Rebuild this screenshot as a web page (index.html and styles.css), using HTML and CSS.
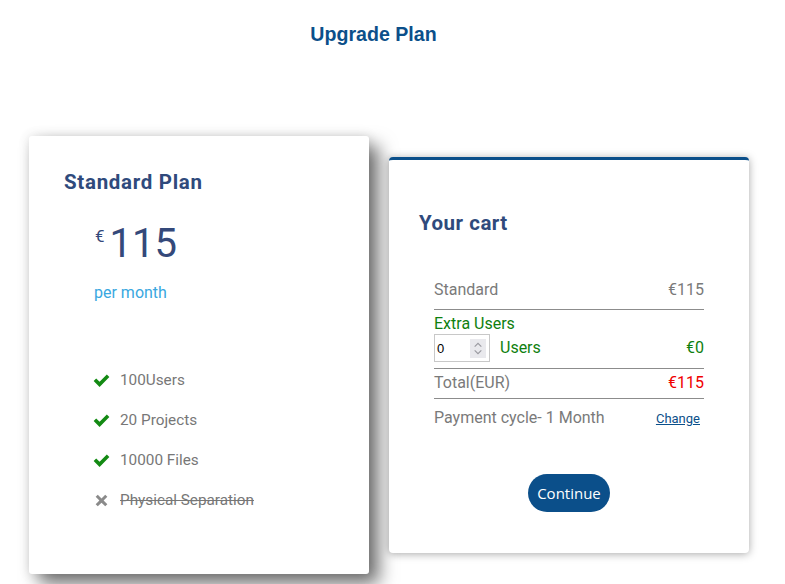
FILE: index.html
```html
<!DOCTYPE html>
<html>
<head>
<meta charset="utf-8">
<link rel="stylesheet" href="styles.css">
</head>
<body>
<div class="header"><h1 class="page-title">Upgrade Plan</h1></div>
<div class="cards">
  <div class="plan-card">
    <h2 class="plan-title">Standard Plan</h2>
    <div class="price"><span class="currency">€</span><span class="amount">115</span></div>
    <div class="period">per month</div>
    <ul class="features">
      <li class="feature"><svg class="ico" viewBox="0 0 16 16"><path d="M0.6 8.4 L3 6 L6.2 9.2 L13 2.4 L15.4 4.8 L6.2 14 Z" fill="#138a13"/></svg><span>100Users</span></li>
      <li class="feature"><svg class="ico" viewBox="0 0 16 16"><path d="M0.6 8.4 L3 6 L6.2 9.2 L13 2.4 L15.4 4.8 L6.2 14 Z" fill="#138a13"/></svg><span>20 Projects</span></li>
      <li class="feature"><svg class="ico" viewBox="0 0 16 16"><path d="M0.6 8.4 L3 6 L6.2 9.2 L13 2.4 L15.4 4.8 L6.2 14 Z" fill="#138a13"/></svg><span>10000 Files</span></li>
      <li class="feature off"><svg class="ico" viewBox="0 0 16 16"><path d="M2.5 4.5 L4.5 2.5 L8 6 L11.5 2.5 L13.5 4.5 L10 8 L13.5 11.5 L11.5 13.5 L8 10 L4.5 13.5 L2.5 11.5 L6 8 Z" fill="#8a8a8a"/></svg><span class="strike">Physical Separation</span></li>
    </ul>
  </div>
  <div class="cart-card">
    <h2 class="cart-title">Your cart</h2>
    <div class="cart">
      <div class="row line">
        <span>Standard</span><span>€115</span>
      </div>
      <div class="extra line">
        <div class="extra-label">Extra Users</div>
        <div class="extra-row">
          <div class="num-input"><span class="num-val">0</span><span class="spin"><svg viewBox="0 0 16 20" width="16" height="20"><path d="M4.5 8 L8 4.5 L11.5 8" fill="none" stroke="#9a9aa0" stroke-width="1.2"/><path d="M4.5 12 L8 15.5 L11.5 12" fill="none" stroke="#9a9aa0" stroke-width="1.2"/></svg></span></div>
          <span class="users">Users</span>
          <span class="extra-price">€0</span>
        </div>
      </div>
      <div class="row total line">
        <span>Total(EUR)</span><span class="red">€115</span>
      </div>
      <div class="row payment">
        <span>Payment cycle- 1 Month</span><a class="change" href="#">Change</a>
      </div>
    </div>
    <div class="actions"><button class="continue">Continue</button></div>
  </div>
</div>
</body>
</html>
```
FILE: styles.css
```css
* { box-sizing: border-box; }
body {
  margin: 0;
  background: #fff;
  font-family: Roboto, "Liberation Sans", sans-serif;
  width: 785px;
  height: 584px;
  overflow: hidden;
}
.header {
  width: 747px;
  text-align: center;
  padding-top: 22px;
}
.page-title {
  margin: 0;
  font-family: "Liberation Sans", Arial, sans-serif;
  font-weight: bold;
  font-size: 19.6px;
  line-height: 24px;
  color: #0b4f8a;
}
.cards {
  display: flex;
  align-items: flex-start;
  gap: 20px;
  padding-left: 29px;
  margin-top: 90px;
}
.plan-card {
  width: 340px;
  height: 438px;
  background: #fff;
  border-radius: 3px;
  padding: 34px 35px 0;
  box-shadow: 10px 10px 18px rgba(0,0,0,0.55), 0 0 12px rgba(0,0,0,0.12);
}
.plan-title, .cart-title {
  margin: 0;
  font-size: 20.5px;
  line-height: 24px;
  font-weight: 700;
  letter-spacing: 0.7px;
  color: #2f4a7c;
}
.cart-title { letter-spacing: 0.5px; }
.price {
  display: flex;
  align-items: flex-start;
  margin: 25px 0 0 31px;
  color: #34497a;
}
.currency {
  font-size: 17px;
  line-height: 20px;
  margin-top: 7px;
  margin-right: 5px;
}
.amount {
  font-size: 40px;
  line-height: 50px;
  font-weight: 400;
}
.period {
  margin: 14px 0 0 30px;
  font-size: 16px;
  line-height: 20px;
  color: #39a7e0;
}
.features {
  list-style: none;
  margin: 67px 0 0 29px;
  padding: 0;
  display: flex;
  flex-direction: column;
  gap: 20px;
}
.feature {
  display: flex;
  align-items: center;
  gap: 10px;
  font-size: 15.3px;
  line-height: 20px;
  color: #777;
}
.ico { width: 17px; height: 17px; flex: none; }
.strike { text-decoration: line-through; }
.cart-card {
  margin-top: 21px;
  width: 360px;
  background: #fff;
  border-top: 3px solid #0b4f8a;
  border-radius: 4px;
  padding: 51px 45px 41px 30px;
  box-shadow: 0 1px 8px rgba(0,0,0,0.35);
}
.cart {
  margin: 45px 0 0 15px;
  font-size: 16px;
  line-height: 20px;
  color: #7a7a7a;
}
.line { border-bottom: 1px solid #8c8c8c; }
.row {
  display: flex;
  justify-content: space-between;
  align-items: baseline;
  padding-bottom: 9px;
}
.extra {
  padding-top: 4px;
  padding-bottom: 6px;
  color: #0f7f0f;
}
.extra-row {
  display: flex;
  align-items: center;
}
.num-input {
  width: 56px;
  height: 28px;
  border: 1px solid #c8c8c8;
  display: flex;
  align-items: center;
  justify-content: space-between;
  padding: 0 3px 0 2px;
  font-family: "Liberation Sans", Arial, sans-serif;
  font-size: 13px;
  color: #000;
}
.num-val { line-height: 16px; margin-top: 2px; }
.spin {
  width: 16px;
  height: 19px;
  background: #e9e9ed;
  display: flex;
  align-items: center;
}
.spin svg { display: block; height: 19px; }
.users { margin-left: 10px; }
.extra-price { margin-left: auto; }
.total { padding-top: 4px; padding-bottom: 5px; }
.red { color: #f00000; }
.payment { padding-top: 9px; padding-bottom: 0; }
.change {
  font-size: 13px;
  color: #0b4f8a;
  margin-right: 4px;
}
.actions {
  display: flex;
  justify-content: center;
  margin-top: 45px;
  padding-left: 15px;
}
.continue {
  width: 82px;
  height: 38px;
  border: none;
  border-radius: 19px;
  background: #0b4f8a;
  color: #fff;
  font-family: "Open Sans", Roboto, sans-serif;
  font-size: 15px;
  padding: 0;
}
```
